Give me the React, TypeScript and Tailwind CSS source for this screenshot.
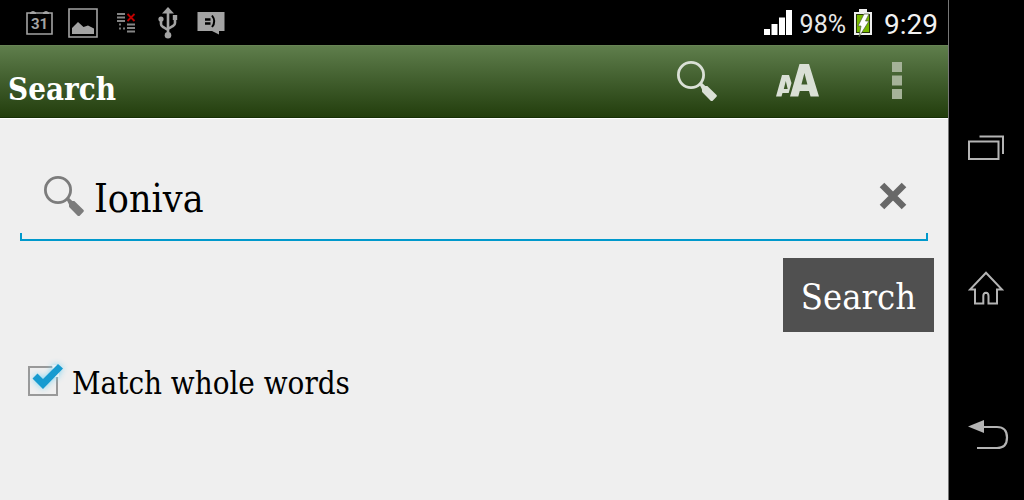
import React, { useState } from "react";

const serif = "font-['DejaVu_Serif_Condensed','DejaVu_Serif',serif]";

function Magnifier({ className }: { className?: string }) {
  return (
    <svg viewBox="0 0 40 40" className={className} aria-hidden="true">
      <circle cx="14" cy="14" r="12.6" fill="none" stroke="currentColor" strokeWidth="2.8" />
      <path d="M22.5 23.5l2-2 3.8 3.400 2 .2 9 8.600q1 1 .2 2l-3.800 4q-1 .9-2 0l-8.600-8.600-.2-2.800z" fill="currentColor" />
    </svg>
  );
}

function StatusBar() {
  return (
    <div className="flex h-[45px] items-center justify-between bg-black pr-2.5 pl-[26px] font-['Roboto',sans-serif] text-white">
      <div className="flex items-center gap-[15px] text-[#a3a3a3]">
        <svg viewBox="0 0 27 27" className="size-[27px]" aria-hidden="true">
          <path d="M1 4h25v21H1z" fill="none" stroke="currentColor" strokeWidth="1.6" />
          <path d="M4 3.500q3-3 6 0V5H4zM17 3.500q3-3 6 0V5h-6z" fill="currentColor" />
          <text x="13.5" y="20" textAnchor="middle" fontSize="15" fontWeight="700" fill="currentColor">31</text>
        </svg>
        <svg viewBox="0 0 30 30" className="size-[30px]" aria-hidden="true">
          <path d="M1 1h28v28H1z" fill="none" stroke="currentColor" strokeWidth="1.6" />
          <path d="M4 26v-6l6-6 5.500 5 4.500-1.500 6 3V26z" fill="currentColor" />
        </svg>
        <svg viewBox="0 0 28 24" className="ml-0.5 h-6 w-7" aria-hidden="true">
          <path d="M2 3h8M2 6.500h8M2 10h8M12 13.500h8M12 17h8M12 20.500h8" stroke="#858585" strokeWidth="2" />
          <path d="M4 12.500h2v2H4zM4 16.500h2v2H4zM8 16.500h2v2H8z" fill="#777777" />
          <path d="M12.500 3l7 7M19.500 3l-7 7" stroke="#c00000" strokeWidth="1.8" />
        </svg>
        <svg viewBox="0 0 20 32" className="h-8 w-5" aria-hidden="true">
          <path d="M10 0l6 6.500H4z" fill="currentColor" />
          <path d="M10 5v23M3 13v4q0 2 2 3l5 3M17 11v5q0 2-2 3l-5 3" fill="none" stroke="currentColor" strokeWidth="2.6" />
          <circle cx="3" cy="12" r="2.600" fill="currentColor" />
          <path d="M14.800 8h4.400v5h-4.400z" fill="currentColor" />
          <circle cx="10" cy="28.200" r="3.300" fill="currentColor" />
        </svg>
        <svg viewBox="0 0 28 24" className="ml-1 h-6 w-7" aria-hidden="true">
          <path d="M.5 1h27v19h-5.500v3.500L15 20H.5z" fill="currentColor" />
          <path d="M8 8.500h5.500M8 12.500h5.500" stroke="#000" strokeWidth="2.600" />
          <path d="M15 4.500q4.500 5.800 0 11.500" fill="none" stroke="#000" strokeWidth="2" />
        </svg>
      </div>
      <div className="flex items-center">
        <svg viewBox="0 0 28 25" className="h-[25px] w-7" fill="#fff" aria-label="Signal strength">
          <path d="M0 19h6v6H0zM7.500 14h6v11h-6zM15 7.500h6V25h-6zM22 0h6v25h-6z" />
        </svg>
        <span className="ml-2 pt-1 text-[25px] leading-8 text-[#e8e8e8]">98%</span>
        <svg viewBox="0 0 18 28" className="ml-2 h-7 w-[18px]" aria-label="Battery charging">
          <path d="M5 0h8v3h5v23H0V3h5z" fill="#eeeeee" />
          <path d="M2 5h14v19H2z" fill="#26350c" />
          <path d="M3 6h12v17H3z" fill="#78b800" />
          <path d="M10 5h5L11.500 12H15L5 28l2-11H4z" fill="#fff" stroke="#4b5b35" strokeWidth=".7" />
        </svg>
        <span className="ml-3 pt-1 text-[28px] leading-8 text-[#f2f2f2]">9:29</span>
      </div>
    </div>
  );
}

function TitleBar() {
  return (
    <header className="flex h-[73px] items-center justify-between border-t border-b border-t-[#688455] border-b-[#173006] bg-linear-to-b from-[#5f7e4c] to-[#233e0c] pr-[11px] pb-0.5 pl-2">
      <h1 className="pt-4 text-[31px] leading-10 font-bold text-white">Search</h1>
      <div className="flex items-center gap-5 text-[#dae0d6]">
        <button type="button" aria-label="Search" className="flex w-20 justify-center">
          <Magnifier className="size-10" />
        </button>
        <button type="button" aria-label="Text size" className="flex w-20 justify-center">
          <svg viewBox="0 0 43 33" className="h-[33px] w-[43px]" fill="currentColor" aria-hidden="true">
            <path fillRule="evenodd" d="M0 32.500L6 11h7l2.500 8-2.800 10H6.500L5.500 32.500zM9.800 17l-2 8h3.900z" />
            <path fillRule="evenodd" d="M14 32.500L23.500 0h9.500L43 32.500h-8.500l-1.500-5.500H23.800l-1.500 5.500zM28.400 9l-3 11.500h6z" />
          </svg>
        </button>
        <button type="button" aria-label="More options" className="flex w-20 justify-center">
          <svg viewBox="0 0 10 37" className="h-[37px] w-2.5" fill="#a5b298" aria-hidden="true">
            <path d="M0 0h10v10H0zM0 13.500h10v10H0zM0 27h10v10H0z" />
          </svg>
        </button>
      </div>
    </header>
  );
}

function SearchForm() {
  const [query, setQuery] = useState("Ioniva");
  const [whole, setWhole] = useState(true);
  return (
    <form className="flex flex-col pt-[42px] pb-12" onSubmit={(e) => e.preventDefault()}>
      <div className="mx-5">
        <div className="flex items-center pt-1 pr-[21px] pb-1.5 pl-6">
          <label htmlFor="query" aria-label="Search text" className="mr-2.5 text-[#7c7c7c]">
            <Magnifier className="size-10" />
          </label>
          <input
            id="query"
            type="text"
            value={query}
            onChange={(e) => setQuery(e.target.value)}
            className="h-[62px] min-w-0 flex-1 bg-transparent pt-1 text-[39px] text-black outline-none"
          />
          <button type="button" aria-label="Clear" onClick={() => setQuery("")} className="text-[#686868]">
            <svg viewBox="0 0 28 28" className="size-7" aria-hidden="true">
              <path d="M3 3l22 22M25 3L3 25" stroke="currentColor" strokeWidth="6.500" />
            </svg>
          </button>
        </div>
        <div className="h-2 border-x-2 border-b-2 border-[#0099cc]" />
      </div>
      <button type="submit" className="mt-[17px] mr-3.5 self-end bg-[#505050] px-[18px] pt-3.5 pb-2.5 text-[36px] leading-[50px] text-white">
        Search
      </button>
      <label className="mt-[31px] flex items-center self-start pl-7 text-[31px] leading-10 text-black">
        <span className="relative mr-3.5 mb-1 flex size-[30px]">
          <input
            type="checkbox"
            checked={whole}
            onChange={(e) => setWhole(e.target.checked)}
            className="size-full appearance-none border-2 border-[#999999]"
          />
          {whole && (
            <svg viewBox="0 0 38 34" className="pointer-events-none absolute -top-1 left-0 h-[34px] w-[38px] drop-shadow-[0_0_3px_#80d4f0]" aria-hidden="true">
              <path d="M24 3h7v12h-5z" fill="#e4f0f4" />
              <path d="M4.500 16.500l5-5 5.500 5.500L30 2l5 4.500L15 27z" fill="#169bd0" />
            </svg>
          )}
        </span>
        Match whole words
      </label>
    </form>
  );
}

function SystemNav() {
  return (
    <nav className="flex w-[76px] shrink-0 flex-col items-center justify-between border-l border-[#777777] bg-black pt-[135px] pr-0.5 pb-[50px] text-[#b4b4b4]">
      <button type="button" aria-label="Recent apps">
        <svg viewBox="0 0 36 25" className="h-[25px] w-9" fill="none" stroke="currentColor" strokeWidth="2" aria-hidden="true">
          <path d="M1 6.500h29.500V24H1zM11.500 1.500H35V19" />
        </svg>
      </button>
      <button type="button" aria-label="Home" className="pb-1">
        <svg viewBox="0 0 36 34" className="h-[34px] w-9" fill="none" stroke="currentColor" strokeWidth="2" aria-hidden="true">
          <path d="M18 1.800L34 18.500h-5V32.500h-8.500V25q0-3-2.500-3.200Q15.300 22 15.300 25v7.500H7v-14H2z" />
        </svg>
      </button>
      <button type="button" aria-label="Back" className="pl-1.5">
        <svg viewBox="0 0 41 30" className="h-[30px] w-[41px]" fill="none" aria-hidden="true">
          <path d="M13 7h16q10 0 10 10.500T29 28H9" stroke="currentColor" strokeWidth="2.200" />
          <path d="M0 6.500L16 0v13z" fill="currentColor" />
        </svg>
      </button>
    </nav>
  );
}

export default function App() {
  return (
    <div className={`flex min-h-screen bg-[#efefef] ${serif}`}>
      <div className="flex min-w-0 flex-1 flex-col">
        <StatusBar />
        <TitleBar />
        <main className="flex-1 border-t border-white">
          <SearchForm />
        </main>
      </div>
      <SystemNav />
    </div>
  );
}
